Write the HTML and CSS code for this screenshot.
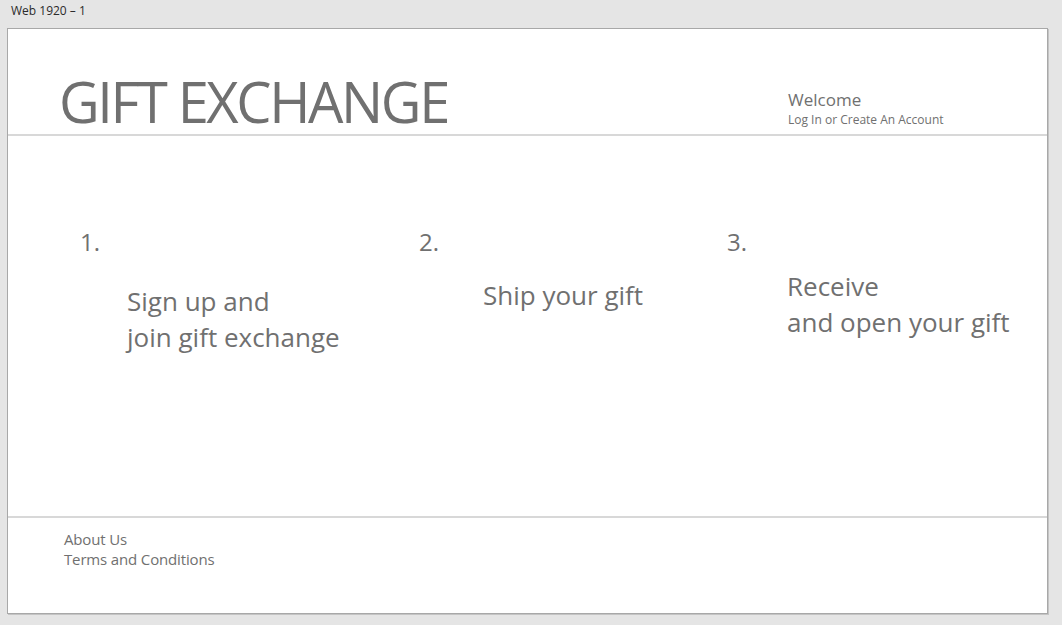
FILE: index.html
```html
<!DOCTYPE html>
<html lang="en">
<head>
<meta charset="utf-8">
<title>Gift Exchange</title>
<link rel="stylesheet" href="styles.css">
</head>
<body>
  <div class="artboard-label">Web 1920 – 1</div>
  <div class="artboard">
    <header class="header">
      <h1 class="title">GIFT EXCHANGE</h1>
      <div class="account">
        <div class="welcome">Welcome</div>
        <div class="login">Log In or Create An Account</div>
      </div>
    </header>
    <main class="steps">
      <section class="step step-1">
        <div class="step-num">1.</div>
        <div class="step-text">Sign up and<br>join gift exchange</div>
      </section>
      <section class="step step-2">
        <div class="step-num">2.</div>
        <div class="step-text">Ship your gift</div>
      </section>
      <section class="step step-3">
        <div class="step-num">3.</div>
        <div class="step-text">Receive<br>and open your gift</div>
      </section>
    </main>
    <footer class="footer">
      <div class="footer-link">About Us</div>
      <div class="footer-link">Terms and Conditions</div>
    </footer>
  </div>
</body>
</html>
```

FILE: styles.css
```css
html, body {
  margin: 0;
  padding: 0;
}

body {
  background: #e5e5e5;
  font-family: "Open Sans", "Noto Sans", sans-serif;
  color: #707070;
  width: 1062px;
  height: 625px;
  overflow: hidden;
}

.artboard-label {
  height: 28px;
  padding-left: 11px;
  font-size: 12px;
  line-height: 22px;
  color: #2b2b2b;
}

.artboard {
  margin-left: 7px;
  width: 1041px;
  height: 586px;
  box-sizing: border-box;
  border: 1px solid #a8a8a8;
  box-shadow: 1px 1px 0 #c4c4c4;
  background: #ffffff;
  display: flex;
  flex-direction: column;
}

.header {
  height: 105px;
  flex: none;
  border-bottom: 2px solid #d8d8d8;
  display: grid;
  grid-template-columns: 780px auto;
}

.title {
  margin: 44px 0 0 0;
  padding-left: 51px;
  font-size: 56px;
  line-height: 56px;
  font-weight: 400;
  letter-spacing: -2.4px;
  color: #707070;
  white-space: nowrap;
}

.account {
  padding-top: 59px;
}

.welcome {
  font-size: 17px;
  line-height: 23px;
}

.login {
  font-size: 12px;
  line-height: 18px;
}

.steps {
  flex: 1;
  display: grid;
  grid-template-columns: 339px 308px auto;
  padding: 91px 0 0 72px;
  align-items: start;
}

.step {
  display: flex;
  flex-direction: column;
}

.step-num {
  font-size: 24px;
  line-height: 30px;
}

.step-text {
  font-size: 26px;
  line-height: 36px;
  white-space: nowrap;
}

.step-1 .step-text {
  margin: 26px 0 0 47px;
}

.step-2 .step-text {
  margin: 20px 0 0 64px;
}

.step-3 .step-text {
  margin: 11px 0 0 60px;
}

.footer {
  flex: none;
  height: 97px;
  box-sizing: border-box;
  border-top: 2px solid #d8d8d8;
  padding: 11px 0 0 56px;
}

.footer-link {
  font-size: 15px;
  line-height: 20px;
  letter-spacing: -0.15px;
}
```
